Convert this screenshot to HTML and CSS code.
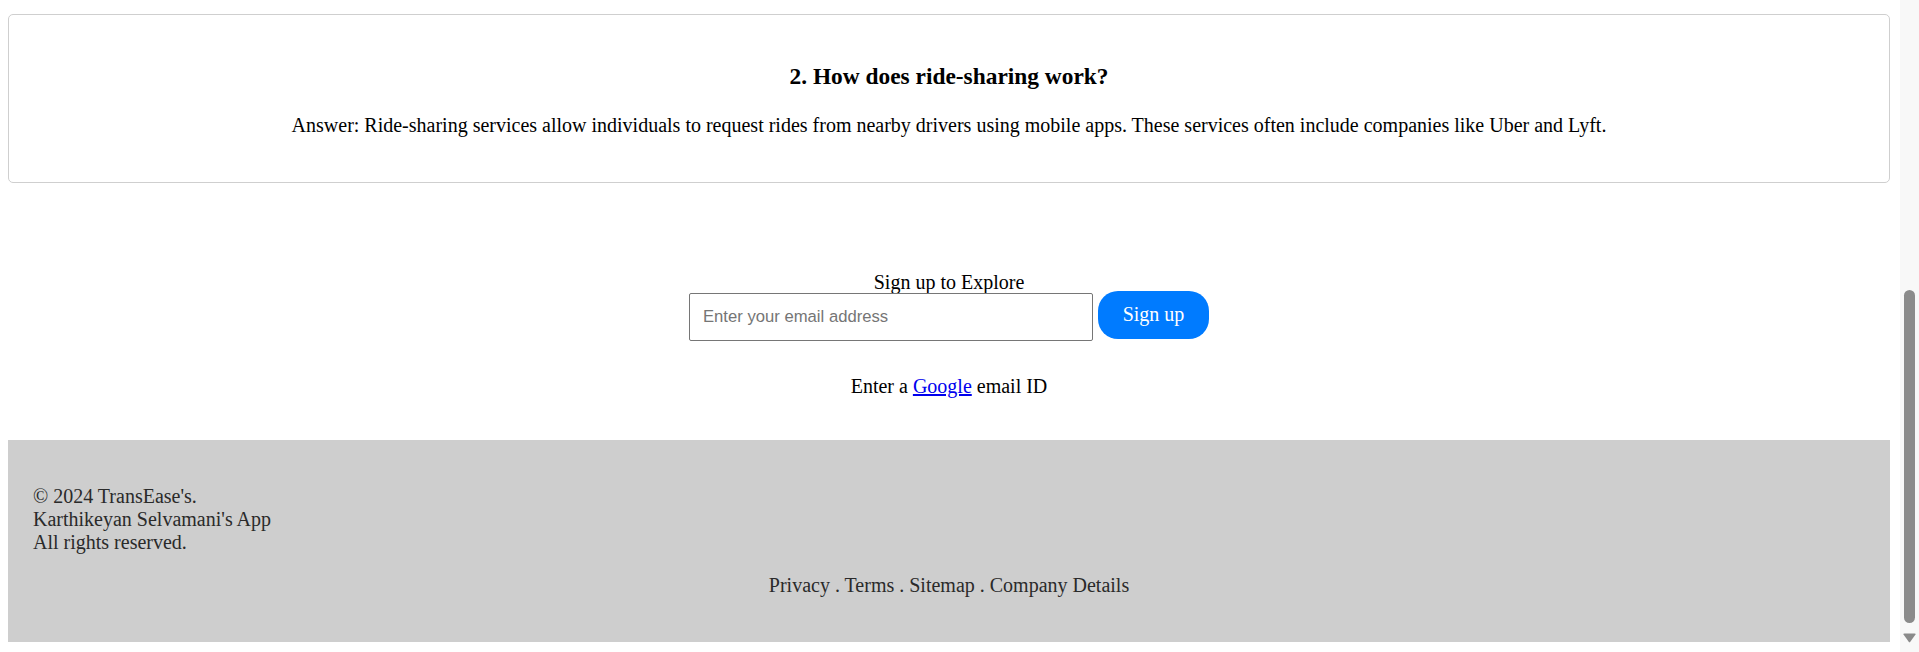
FILE: index.html
```html
<!DOCTYPE html>
<html lang="en">
<head>
<meta charset="utf-8">
<title>TransEase</title>
<link rel="stylesheet" href="styles.css">
</head>
<body>
<div class="viewport">
  <main class="page">
    <section class="faq-card">
      <h3 class="faq-question">2. How does ride-sharing work?</h3>
      <p class="faq-answer">Answer: Ride-sharing services allow individuals to request rides from nearby drivers using mobile apps. These services often include companies like Uber and Lyft.</p>
    </section>

    <section class="signup">
      <div class="signup-label">Sign up to Explore</div>
      <form class="signup-row" onsubmit="return false">
        <input class="signup-input" type="email" placeholder="Enter your email address">
        <button class="signup-button" type="submit">Sign up</button>
      </form>
      <p class="signup-hint">Enter a <a href="#">Google</a> email ID</p>
    </section>

    <footer class="footer">
      <p class="footer-copy">© 2024 TransEase's.<br>Karthikeyan Selvamani's App<br>All rights reserved.</p>
      <p class="footer-links">Privacy . Terms . Sitemap . Company Details</p>
    </footer>
  </main>

  <div class="scrollbar" aria-hidden="true">
    <div class="scrollbar-thumb"></div>
    <svg class="scrollbar-arrow" width="13" height="10" viewBox="0 0 13 10"><path d="M0.5 1.5 Q0 0.5 1.5 0.5 H11.5 Q13 0.5 12.5 1.5 L7.3 8.8 Q6.5 9.8 5.7 8.8 Z" fill="#8a8a8a"/></svg>
  </div>
</div>
</body>
</html>
```

FILE: styles.css
```css
html, body {
  margin: 0;
  padding: 0;
  height: 652px;
  overflow: hidden;
  background: #ffffff;
}

body {
  font-family: "Liberation Serif", "Times New Roman", serif;
  font-size: 20px;
  color: #000;
}

.viewport {
  display: flex;
  height: 652px;
}

.page {
  flex: 1;
  margin: 0 10px 0 8px;
  padding-top: 14px;
  min-width: 0;
}

.faq-card {
  border: 1px solid #cfcfcf;
  border-radius: 5px;
  padding: 25px 20px;
  text-align: center;
}

.faq-question {
  font-size: 23.4px;
  font-weight: bold;
  margin: 23.4px 0;
  line-height: normal;
}

.faq-answer {
  margin: 20px 0;
}

.signup {
  margin-top: 89.8px;
  text-align: center;
}

.signup-label {
  line-height: 18px;
}

.signup-row {
  display: flex;
  justify-content: center;
  align-items: flex-start;
  gap: 5px;
  margin: 0;
}

.signup-input {
  box-sizing: border-box;
  width: 404px;
  height: 48px;
  margin-top: 2px;
  padding: 0 13px;
  border: 1px solid #767676;
  border-radius: 2px;
  font-family: "Liberation Sans", Arial, sans-serif;
  font-size: 16.67px;
  color: #000;
  background: #fff;
  outline: none;
}

.signup-input::placeholder {
  color: #757575;
}

.signup-button {
  box-sizing: border-box;
  height: 48px;
  width: 111px;
  padding: 0;
  border: none;
  border-radius: 20px;
  background: #007bff;
  color: #fff;
  font-family: "Liberation Serif", "Times New Roman", serif;
  font-size: 20px;
  cursor: pointer;
}

.signup-hint {
  margin: 34.4px 0 0;
}

.signup-hint a {
  color: #0000ee;
  text-decoration: underline;
}

.footer {
  margin-top: 41.8px;
  background: #cecece;
  color: #2a2a2a;
  padding: 25px;
}

.footer-copy {
  margin: 20px 0;
}

.footer-links {
  margin: 20px 0;
  text-align: center;
}

.scrollbar {
  width: 19px;
  flex: none;
  background: #f8f8f8;
  display: flex;
  flex-direction: column;
  align-items: center;
  padding-top: 290px;
  box-sizing: border-box;
}

.scrollbar-thumb {
  width: 11px;
  height: 333px;
  border-radius: 6px;
  background: #8b8b8b;
}

.scrollbar-arrow {
  margin-top: 10px;
  display: block;
}
```
